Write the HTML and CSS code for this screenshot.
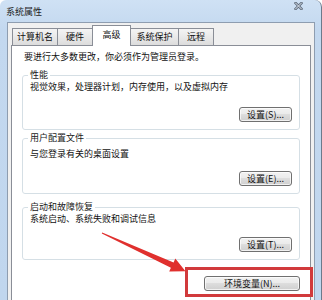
FILE: index.html
```html
<!DOCTYPE html>
<html lang="zh-CN">
<head>
<meta charset="utf-8">
<title>系统属性</title>
<link rel="stylesheet" href="styles.css">
</head>
<body>
<div class="window">
  <div class="titlebar">
    <span class="title">系统属性</span>
    <svg class="close" width="9" height="8" viewBox="0 0 9 8">
      <path d="M1.5 1 L7.5 7 M7.5 1 L1.5 7" stroke="#5e6b7c" stroke-width="2.6" stroke-linecap="square"/>
      <path d="M1.5 1 L7.5 7 M7.5 1 L1.5 7" stroke="#e4ebf3" stroke-width="1" stroke-linecap="square"/>
    </svg>
  </div>
  <div class="client">
    <div class="tabs">
      <div class="tab t1">计算机名</div>
      <div class="tab t2">硬件</div>
      <div class="tab t3 active">高级</div>
      <div class="tab t4">系统保护</div>
      <div class="tab t5">远程</div>
    </div>
    <div class="panel">
      <p class="note">要进行大多数更改，你必须作为管理员登录。</p>
      <fieldset class="group g1">
        <legend>性能</legend>
        <p class="desc">视觉效果，处理器计划，内存使用，以及虚拟内存</p>
        <div class="btnrow"><button class="btn small">设置(S)...</button></div>
      </fieldset>
      <fieldset class="group g2">
        <legend>用户配置文件</legend>
        <p class="desc">与您登录有关的桌面设置</p>
        <div class="btnrow"><button class="btn small">设置(E)...</button></div>
      </fieldset>
      <fieldset class="group g3">
        <legend>启动和故障恢复</legend>
        <p class="desc">系统启动、系统失败和调试信息</p>
        <div class="btnrow"><button class="btn small">设置(T)...</button></div>
      </fieldset>
      <div class="envrow"><button class="btn env">环境变量(N)...</button></div>
    </div>
  </div>
  <div class="highlight"></div>
  <svg class="arrow" width="322" height="300" viewBox="0 0 322 300">
    <polygon fill="#e0302e" points="102.2,232.5 173.6,262.5 175.3,258.6 185.5,271.3 169.2,271.6 170.9,267.7 101.8,233.5"/>
  </svg>
</div>
</body>
</html>
```
FILE: styles.css
```css
html, body {
  margin: 0;
  padding: 0;
  background: #ffffff;
  overflow: hidden;
}
body {
  font-family: "Noto Sans CJK SC", "Noto Sans", sans-serif;
  font-size: 9px;
  color: #111;
}
.window {
  position: relative;
  width: 321px;
  height: 300px;
  background: linear-gradient(180deg, #cfe1f4 0%, #c3d8ef 30px, #c0d6ee 100%);
  border-right: 1px solid #6c7a8b;
  border-top-left-radius: 6px;
  border-top-right-radius: 7px;
  overflow: hidden;
  display: flex;
  flex-direction: column;
}
.titlebar {
  height: 22px;
  display: flex;
  justify-content: space-between;
  align-items: flex-start;
  padding: 0 18px 0 6px;
  flex: none;
}
.title {
  margin-top: 6px;
  line-height: 12px;
  color: #1d1d1d;
}
.close {
  margin-top: 2px;
}
.client {
  flex: 1;
  margin: 0 6px 0 7px;
  background: #f0f0f0;
  border: 1px solid #8e9db0;
  border-bottom: none;
  display: flex;
  flex-direction: column;
}
.tabs {
  height: 22px;
  display: flex;
  align-items: flex-end;
  padding-left: 4px;
  flex: none;
}
.tab {
  height: 17px;
  box-sizing: border-box;
  border: 1px solid #8a8e97;
  border-bottom: none;
  background: linear-gradient(180deg, #f4f4f4 0%, #e9e9e9 50%, #dcdcdc 100%);
  line-height: 15px;
  text-align: center;
  margin-left: -1px;
  color: #111;
}
.t1 { width: 46px; margin-left: 0; }
.t2 { width: 36px; }
.t3 { width: 39px; }
.t4 { width: 49px; }
.t5 { width: 36px; }
.tab.active {
  height: 21px;
  margin-bottom: -1px;
  background: #ffffff;
  position: relative;
  z-index: 1;
  line-height: 17px;
}
.panel {
  flex: 1;
  margin: 0 3px;
  background: #ffffff;
  border: 1px solid #8a8e97;
  border-bottom: none;
  padding: 5px 10px 0 10px;
}
.note {
  margin: 0 0 0 2px;
  line-height: 12px;
}
.group {
  margin: 0;
  padding: 0 7px 7px 7px;
  border: 1px solid #d5dfe5;
  border-radius: 3px;
  min-inline-size: 0;
}
.group legend {
  padding: 0 2px;
  margin-left: -2px;
  line-height: 12px;
  color: #1a1a1a;
}
.desc {
  margin: 0;
  line-height: 12px;
}
.btnrow {
  display: flex;
  justify-content: flex-end;
}
.g1 { margin-top: 6px; }
.g1 .btnrow { margin-top: 14px; }
.g2 { margin-top: 2px; }
.g2 .desc { margin-top: 4px; }
.g2 .btnrow { margin-top: 11px; }
.g3 { margin-top: 7px; }
.g3 .btnrow { margin-top: 12px; }
.btn {
  font-family: "Noto Sans CJK SC", "Noto Sans", sans-serif;
  font-size: 9px;
  color: #111;
  height: 15px;
  padding: 0;
  line-height: 13px;
  border: 1px solid #707070;
  border-radius: 3px;
  background: linear-gradient(180deg, #f2f2f2 0%, #ebebeb 45%, #dddddd 50%, #cfcfcf 100%);
  box-shadow: inset 0 0 0 1px rgba(255,255,255,0.7);
}
.btn.small { width: 53px; }
.envrow {
  display: flex;
  justify-content: flex-end;
  margin-top: 16px;
}
.btn.env { width: 96px; }
.highlight {
  position: absolute;
  left: 185px;
  top: 267px;
  width: 128px;
  height: 30px;
  box-sizing: border-box;
  border: 3px solid #d13a3c;
}
.arrow {
  position: absolute;
  left: 0;
  top: 0;
  pointer-events: none;
}
```
